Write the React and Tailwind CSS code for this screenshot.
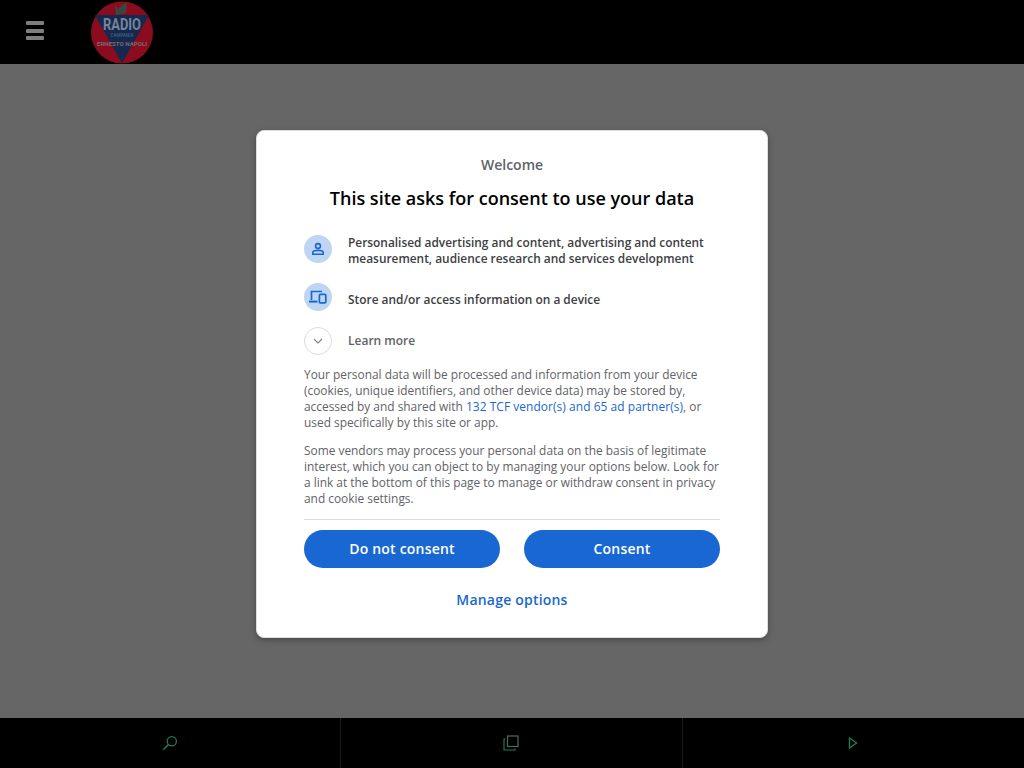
import React from 'react'

const Logo = () => (
    <svg width="62" height="64" viewBox="0 0 62 64">
        <circle cx="31" cy="32.5" r="31" fill="#8a0c1e" />
        <path d="M4 15 L58 15 L31 63.5 Z" fill="#14294d" />
        <path d="M24 5 L27 9 L30 6 L33 4 L36 3 L35 13 L25 15 Z" fill="#3a4640" />
        <text x="31" y="30" textAnchor="middle" fontFamily="Roboto, sans-serif" fontWeight="700" fontSize="16" fill="#76849a" textLength="38" lengthAdjust="spacingAndGlyphs">RADIO</text>
        <text x="31" y="37" textAnchor="middle" fontFamily="Roboto, sans-serif" fontWeight="700" fontSize="4.5" fill="#3f5a78">CAMPANIA</text>
        <text x="31" y="46" textAnchor="middle" fontFamily="Roboto, sans-serif" fontWeight="700" fontSize="6" fill="#7a6872" textLength="50" lengthAdjust="spacingAndGlyphs">ERNESTO NAPOLI</text>
    </svg>
)

export default function App() {
    return (
        <div className="flex h-screen flex-col overflow-hidden font-['Open_Sans',sans-serif]">
            <header className="z-10 flex h-16 shrink-0 items-center bg-black pl-[26px]">
                <div className="mb-[3px] flex w-[18px] flex-col gap-[3.5px]">
                    <span className="h-[4px] rounded-[1px] bg-[#7e7e7e]"></span>
                    <span className="h-[4px] rounded-[1px] bg-[#7e7e7e]"></span>
                    <span className="h-[4px] rounded-[1px] bg-[#7e7e7e]"></span>
                </div>
                <div className="ml-[47px]"><Logo /></div>
            </header>

            <main className="flex flex-1 justify-center bg-[#666666] pt-[66px]">
                <div className="h-[508px] w-[512px] rounded-lg border border-[#dadce0] bg-white px-[47px] pt-6 shadow-[0_2px_6px_rgba(0,0,0,0.3)]">
                    <p className="text-center text-sm leading-5 font-semibold text-[#5f6368]">Welcome</p>
                    <h1 className="mt-[11px] text-center text-lg leading-6 font-semibold text-black">This site asks for consent to use your data</h1>

                    <div className="mt-[25px] flex">
                        <div className="flex h-7 w-7 shrink-0 items-center justify-center rounded-full bg-[#bfd6f3]">
                            <svg width="16" height="16" viewBox="0 0 16 16" fill="none" stroke="#1967d2" strokeWidth="1.6">
                                <circle cx="8" cy="5" r="2.4" />
                                <path d="M2.8 13.2 V11.6 C2.8 10.2 5.6 9.4 8 9.4 C10.4 9.4 13.2 10.2 13.2 11.6 V13.2 Z" />
                            </svg>
                        </div>
                        <div className="-mt-px mb-px ml-4 text-[11.9px] leading-4 font-semibold text-[#3c4043]">
                            Personalised advertising and content, advertising and content measurement, audience research and services development
                        </div>
                    </div>

                    <div className="mt-4 flex">
                        <div className="flex h-7 w-7 shrink-0 items-center justify-center rounded-full bg-[#bfd6f3]">
                            <svg width="18" height="14" viewBox="0 0 18 14" fill="none" stroke="#1967d2" strokeWidth="1.7">
                                <path d="M2.5 10 V1.5 H13" />
                                <path d="M0 11.6 H8.5" strokeWidth="2" />
                                <rect x="10.4" y="4.4" width="6.4" height="8.4" rx="1" />
                            </svg>
                        </div>
                        <div className="mt-2 ml-4 text-[11.9px] leading-4 font-semibold text-[#3c4043]">Store and/or access information on a device</div>
                    </div>

                    <div className="mt-4 flex items-center">
                        <div className="flex h-7 w-7 shrink-0 items-center justify-center rounded-full border border-[#dadce0]">
                            <svg width="10" height="6" viewBox="0 0 10 6" fill="none" stroke="#80868b" strokeWidth="1.2">
                                <path d="M1 1 L5 5 L9 1" />
                            </svg>
                        </div>
                        <div className="ml-4 text-xs leading-4 font-semibold text-[#5f6368]">Learn more</div>
                    </div>

                    <div className="mt-[11px] text-[11.9px] leading-4 text-[#5f6368]">
                        <p>
                            Your personal data will be processed and information from your device (cookies, unique identifiers, and other device data) may be stored by, accessed by and shared with <a className="font-medium tracking-[0.08px] text-[#1967d2]">132 TCF vendor(s) and 65 ad partner(s)</a>, or used specifically by this site or app.
                        </p>
                        <p className="mt-3">
                            Some vendors may process your personal data on the basis of legitimate interest, which you can object to by managing your options below. Look for a link at the bottom of this page to manage or withdraw consent in privacy and cookie settings.
                        </p>
                    </div>

                    <div className="mt-[13px] border-t border-[#dadce0] pt-[10px]">
                        <div className="flex gap-6">
                            <button className="h-[38px] flex-1 rounded-[19px] bg-[#1967d2] text-sm font-semibold tracking-[0.2px] text-white">Do not consent</button>
                            <button className="h-[38px] flex-1 rounded-[19px] bg-[#1967d2] text-sm font-semibold tracking-[0.2px] text-white">Consent</button>
                        </div>
                        <button className="mx-auto mt-[13px] block h-[38px] text-sm font-semibold tracking-[0.2px] text-[#1967d2]">Manage options</button>
                    </div>
                </div>
            </main>

            <footer className="flex h-[50px] shrink-0 bg-black">
                <div className="flex w-[341px] items-center justify-center border-r border-[#1c1c1c]">
                    <svg width="16" height="16" viewBox="0 0 16 16" fill="none" stroke="#1f7a52" strokeWidth="1.3">
                        <circle cx="9.8" cy="6.2" r="4.6" />
                        <path d="M6.4 9.6 L1.2 14.8" strokeWidth="1.6" />
                    </svg>
                </div>
                <div className="flex w-[342px] items-center justify-center border-r border-[#1c1c1c]">
                    <svg className="mr-[2px]" width="16" height="16" viewBox="0 0 16 16" fill="none" strokeWidth="1.2">
                        <rect x="4.5" y="1" width="10.5" height="10.5" stroke="#53695f" />
                        <path d="M2.5 4 H1 V15 H12 V13.5" stroke="#1f7a52" />
                    </svg>
                </div>
                <div className="flex flex-1 items-center justify-center">
                    <svg className="mr-[2px]" width="10" height="12" viewBox="0 0 10 12" fill="none" stroke="#1f7a52" strokeWidth="1.4">
                        <path d="M1.5 1 L8.5 6 L1.5 11 Z" />
                    </svg>
                </div>
            </footer>
        </div>
    )
}
